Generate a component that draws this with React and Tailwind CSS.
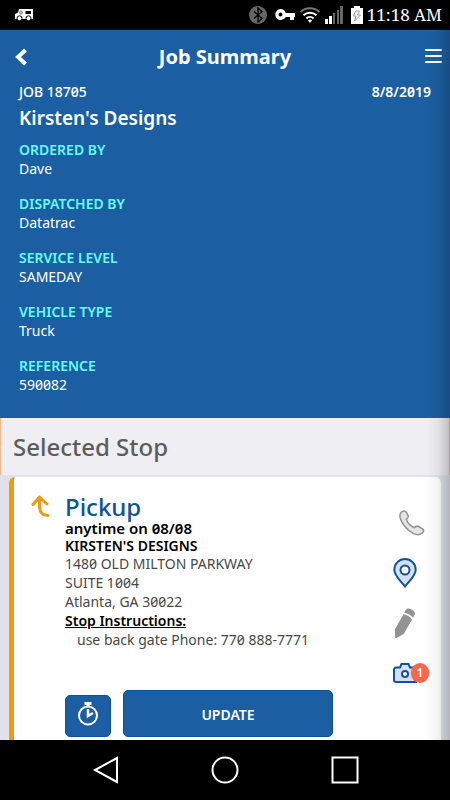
import React from "react";

const details = [
  { label: "ORDERED BY", value: "Dave" },
  { label: "DISPATCHED BY", value: "Datatrac" },
  { label: "SERVICE LEVEL", value: "SAMEDAY" },
  { label: "VEHICLE TYPE", value: "Truck" },
  { label: "REFERENCE", value: "590082" },
];

const address = ["1480 OLD MILTON PARKWAY", "SUITE 1004", "Atlanta, GA 30022"];

const StatusBar = () => (
  <div className="flex h-[30px] shrink-0 items-center bg-black pl-3.5 pr-2 text-white">
    <svg width="20" height="12" viewBox="0 0 20 12" aria-hidden="true">
      <path d="M5 0h14v10H1V5l3-1.500z" fill="#fff" />
      <path d="M11.500 2H17v3h-5.500z" fill="#000" />
      <circle cx="7" cy="3.500" r="1.500" fill="#ccc" stroke="#777" />
      <circle cx="5.500" cy="9.300" r="2.500" fill="#fff" stroke="#000" />
      <circle cx="14.500" cy="9.300" r="2.500" fill="#fff" stroke="#000" />
    </svg>
    <div className="ml-auto flex items-center">
      <svg width="18" height="18" viewBox="0 0 18 18" className="mr-2" aria-hidden="true">
        <circle cx="9" cy="9" r="9" fill="#666" />
        <path d="M5 5.500l8 7L9 16V2l4 3.500-8 7" fill="none" stroke="#000" strokeWidth="1.300" />
      </svg>
      <svg width="20" height="12" viewBox="0 0 20 12" className="mr-1" aria-hidden="true">
        <path fillRule="evenodd" fill="#fff" d="M5.500 0a5.500 5.500 0 0 1 5.200 4H20v4h-1v3h-4V8h-4.300A5.500 5.500 0 1 1 5.500 0zM5.500 3.500a2 2 0 1 0 0 4a2 2 0 0 0 0-4z" />
      </svg>
      <svg width="22" height="16" viewBox="0 0 22 16" className="mr-1" fill="none" aria-hidden="true">
        <path d="M1.500 5a14 14 0 0 1 19 0" stroke="#777" strokeWidth="2" />
        <path d="M4.500 8.200a9.500 9.500 0 0 1 13 0M7.500 11.500a5 5 0 0 1 7 0" stroke="#fff" strokeWidth="2" />
        <path d="M9 13.500L11 16l2-2.500a3 3 0 0 0-4 0z" fill="#fff" />
      </svg>
      <svg width="18" height="18" viewBox="0 0 18 18" className="mr-2" aria-hidden="true">
        <path d="M0 13h3v5H0zM4 10h3v8H4z" fill="#fff" />
        <path d="M8 7h2v11H8zM12 4h2v14h-2zM15 0h3v18h-3z" fill="#666" />
      </svg>
      <svg width="12" height="18" viewBox="0 0 12 18" className="mr-1" aria-hidden="true">
        <path d="M3 0h6v2h3v16H0V2h3z" fill="#fff" />
        <path d="M4.500 5h4l-2 4h3l-6 6 1.500-5H2.500z" fill="none" stroke="#999" />
      </svg>
      <span className="font-['Noto_Serif',serif] text-[17px] leading-6">11:18 AM</span>
    </div>
  </div>
);

const JobHeader = () => (
  <header className="bg-[#1b5fa2] pb-6 text-white">
    <div className="flex h-[54px] items-center justify-between px-2">
      <button aria-label="Back" className="flex w-5 justify-end">
        <svg width="14" height="18" viewBox="0 0 14 18" fill="none" stroke="#fff" strokeWidth="4" aria-hidden="true">
          <path d="M11.500 2L4 9l7.500 7" />
        </svg>
      </button>
      <h1 className="text-xl font-bold">Job Summary</h1>
      <button aria-label="Menu" className="flex w-5 justify-end">
        <svg width="17" height="18" viewBox="0 0 17 18" stroke="#fff" strokeWidth="2" strokeLinecap="round" aria-hidden="true">
          <path d="M1 2h15M1 8h15M1 14h15" />
        </svg>
      </button>
    </div>
    <div className="px-[19px]">
      <div className="flex justify-between text-sm leading-4">
        <p className="font-medium">JOB 18705</p>
        <p className="font-semibold">8/8/2019</p>
      </div>
      <h2 className="py-0.5 text-[19px] font-semibold leading-8">Kirsten's Designs</h2>
      <dl className="mt-1 flex flex-col gap-4 text-sm leading-[19px]">
        {details.map((item) => (
          <div key={item.label}>
            <dt className="font-semibold text-[#64fcfb]">{item.label}</dt>
            <dd>{item.value}</dd>
          </div>
        ))}
      </dl>
    </div>
  </header>
);

const StopActions = () => (
  <div className="flex w-12 shrink-0 flex-col pt-[21px]">
    <button aria-label="Call" className="flex h-[50px] items-center pl-1.5">
      <svg width="26" height="26" viewBox="0 0 26 26" aria-hidden="true">
        <path d="M2 2.500C4 .5 6 .8 7.500 2.500l1.700 3.300c.6 1.500-.8 2.500-1.900 3.700 1.200 3.200 4.700 6.700 8.200 8.200 1-1.300 2.500-2 4-1.200l4.500 2.700c1 1 .5 2.500-.7 3.800-2 2-5.800 2-9.300.3C7.500 20 2.500 13 1.200 8 .7 5.500.8 3.700 2 2.500z" fill="#e4e4e4" stroke="#929292" strokeWidth="1.500" />
      </svg>
    </button>
    <button aria-label="Map" className="flex h-[50px] items-center">
      <svg width="24" height="30" viewBox="0 0 24 30" fill="#d3e0ef" stroke="#0f529b" strokeWidth="2" aria-hidden="true">
        <path d="M12 1a10.700 10.700 0 0 1 10.700 10.700C22.700 18 16 23 12 28.500 8 23 1.300 18 1.300 11.700A10.700 10.700 0 0 1 12 1z" />
        <circle cx="12" cy="12" r="4.500" fill="#fff" />
      </svg>
    </button>
    <button aria-label="Edit" className="flex h-[50px] items-center">
      <svg width="24" height="30" viewBox="0 0 24 30" fill="#939393" aria-hidden="true">
        <path d="M12.500 2.200C14-.2 16 .1 18.500 1.500s4.200 3 3 5.500l-1.500 2.700c-2-2.500-5-4.200-8.800-5zM10.500 6.200c3.500.7 6.700 2.500 8.500 5.200L10.800 26l-7.300 4c-.9.300-1.300 0-1.300-.9l-.4-7.600z" />
      </svg>
    </button>
    <button aria-label="Photos" className="relative flex h-[50px] items-center">
      <svg width="24" height="20" viewBox="0 0 24 20" fill="#d3e0ef" stroke="#0f529b" strokeWidth="2" aria-hidden="true">
        <path d="M3 4.500h4L8.500 1h7L17 4.500h6V19H3a2 2 0 0 1-2-2V6.500a2 2 0 0 1 2-2z" />
        <circle cx="12" cy="11" r="3" fill="#fff" />
      </svg>
      <span className="absolute left-[18px] top-[15px] h-5 w-[18px] rounded-full bg-[#fd654b] text-center text-xs font-semibold leading-5 text-white">
        1
      </span>
    </button>
  </div>
);

const StopCard = () => (
  <article className="mx-[9px] flex flex-1 rounded-t-md border-l-[5px] border-[#ed9b12] bg-white">
    <div className="w-[51px] shrink-0 pl-[17px] pt-[17px]">
      <svg width="19" height="24" viewBox="0 0 19 24" fill="none" stroke="#ed9b12" strokeWidth="3" strokeLinecap="round" strokeLinejoin="round" aria-hidden="true">
        <path d="M2 10.500L8.500 3l7.500 7M8.500 3v9c0 6 3 9.300 8.500 9.500" />
      </svg>
    </div>
    <div className="min-w-0 flex-1 pb-[3px] pt-[17px]">
      <h3 className="text-2xl font-medium leading-[26px] text-[#0f529b]">Pickup</h3>
      <p className="text-[15px] font-semibold leading-[17px] text-black">anytime on 08/08</p>
      <p className="text-sm font-semibold leading-[17px] text-black">KIRSTEN'S DESIGNS</p>
      <address className="text-sm not-italic leading-[19px] text-[#484848]">
        {address.map((line) => (
          <p key={line}>{line}</p>
        ))}
      </address>
      <p className="text-sm font-semibold leading-[19px] text-black underline">Stop Instructions:</p>
      <p className="pl-3 text-sm leading-[19px] text-[#484848]">use back gate Phone: 770 888-7771</p>
      <div className="mr-15 mt-[41px] flex items-end gap-3">
        <button aria-label="Timer" className="flex h-[42px] w-[46px] items-start justify-center rounded-[5px] border border-[#0f529b] bg-[#1b5fa2] pt-1.5">
          <svg width="22" height="24" viewBox="0 0 22 24" fill="none" stroke="#fff" strokeWidth="2" aria-hidden="true">
            <circle cx="11" cy="13.500" r="9" />
            <path d="M7.500 1.500h7M11 2v3" strokeWidth="3" />
            <path d="M11 7v7l5-3" strokeWidth="2.500" />
          </svg>
        </button>
        <button className="h-[47px] flex-1 rounded-[5px] border border-[#0f529b] bg-[#1b5fa2] pt-0.5 text-sm font-semibold text-white">
          UPDATE
        </button>
      </div>
    </div>
    <StopActions />
  </article>
);

const NavBar = () => (
  <nav className="flex h-[60px] shrink-0 items-center justify-evenly bg-black">
    <button aria-label="Back">
      <svg width="28" height="28" viewBox="0 0 28 28" fill="none" stroke="#fff" strokeWidth="2" aria-hidden="true">
        <path d="M25 2v24L3 14z" />
      </svg>
    </button>
    <button aria-label="Home">
      <svg width="28" height="28" viewBox="0 0 28 28" fill="none" stroke="#fff" strokeWidth="2" aria-hidden="true">
        <circle cx="14" cy="14" r="12.500" />
      </svg>
    </button>
    <button aria-label="Recent apps">
      <svg width="28" height="28" viewBox="0 0 28 28" fill="none" stroke="#fff" strokeWidth="2" aria-hidden="true">
        <path d="M1.500 1.500h25v25h-25z" />
      </svg>
    </button>
  </nav>
);

const App = () => {
  return (
    <div className="flex min-h-screen flex-col bg-[#dfe2ec] font-['Noto_Sans',sans-serif] slashed-zero">
      <StatusBar />
      <main className="relative flex flex-1 flex-col">
        <JobHeader />
        <h2 className="mb-0.5 border-x border-[#f3b98c] bg-[#eeeef3] px-3 py-3 text-2xl font-medium leading-[33px] text-[#5c5c5c]">
          Selected Stop
        </h2>
        <StopCard />
        <div className="pointer-events-none absolute inset-y-0 right-0 w-6 bg-linear-to-l from-black/20 via-black/5 to-transparent" />
      </main>
      <NavBar />
    </div>
  );
};

export default App;
